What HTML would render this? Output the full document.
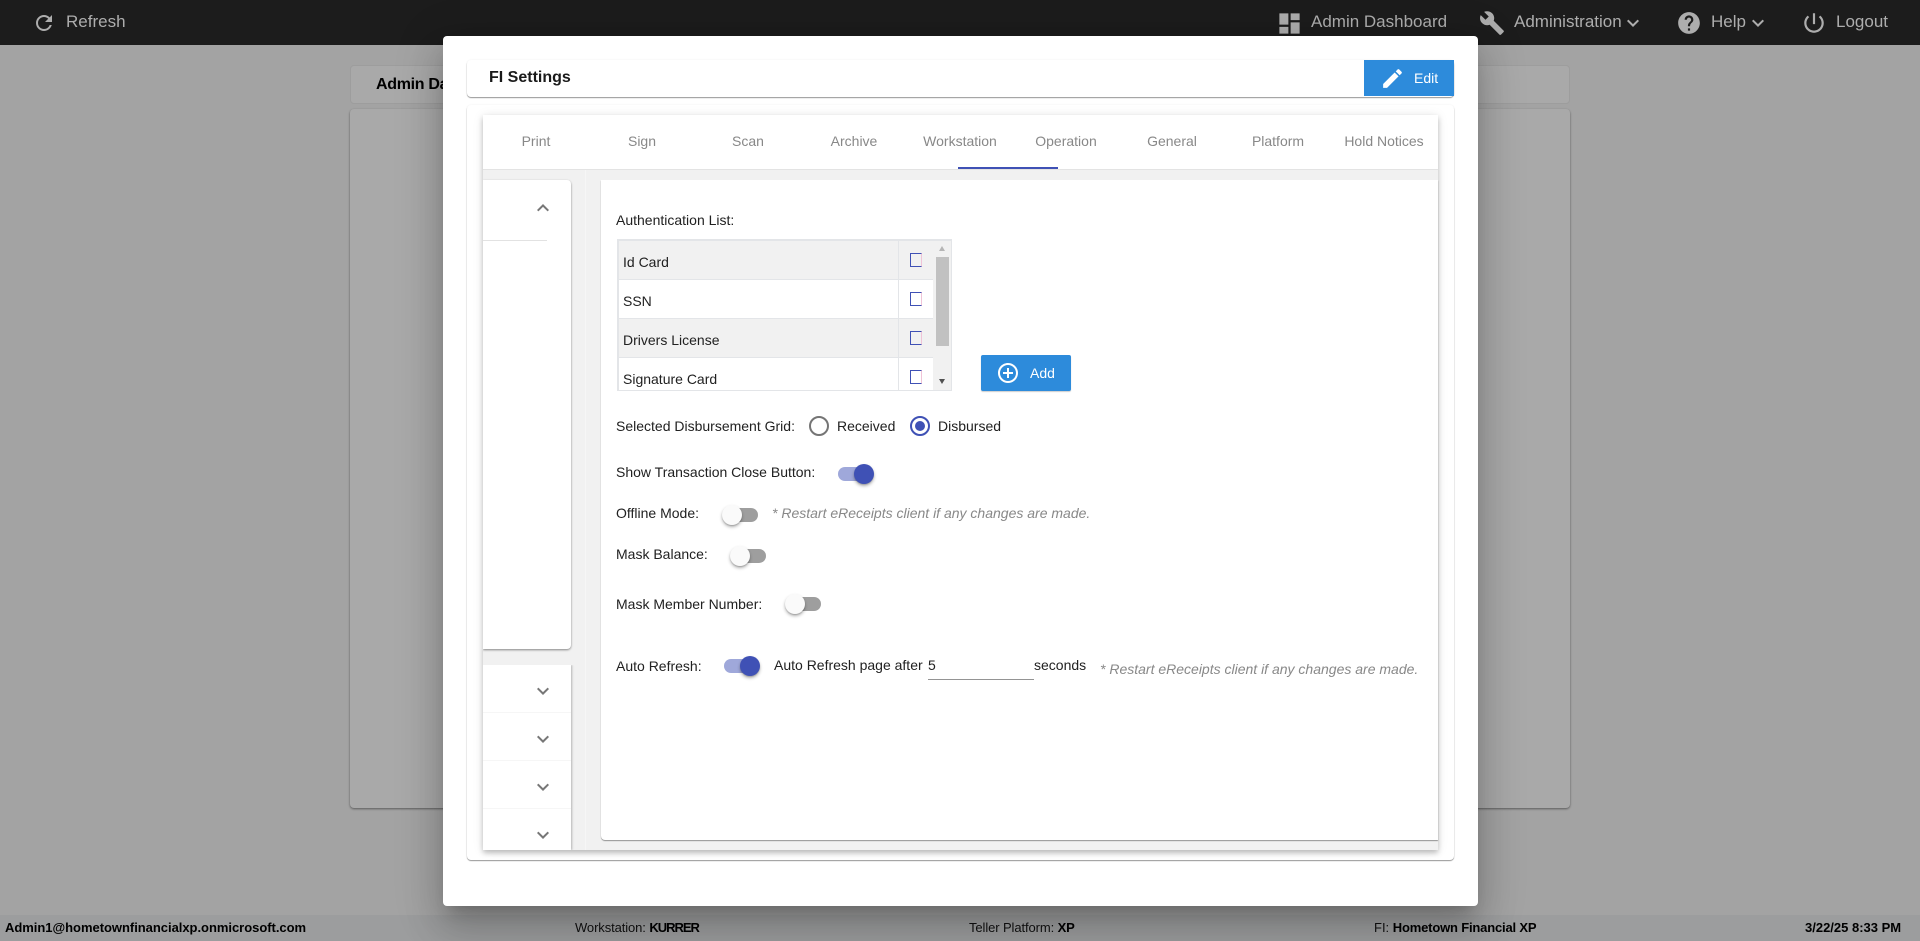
<!DOCTYPE html>
<html><head><meta charset="utf-8"><title>FI Settings</title>
<style>
*{box-sizing:border-box}
html,body{margin:0;padding:0;width:1920px;height:941px;overflow:hidden;background:#a3a3a3;font-family:"Liberation Sans",Arial,sans-serif}
.a{position:absolute}
.t{position:absolute;white-space:nowrap;height:20px;line-height:20px;font-size:14px;color:#212121}
.n{font-size:17px;color:#adadad;height:24px;line-height:24px}
.tab{position:absolute;top:131px;width:106px;text-align:center;font-size:14px;line-height:20px;color:#888}
.tr{position:absolute;height:14px;width:34px;border-radius:7px}
.th{position:absolute;width:20px;height:20px;border-radius:50%;box-shadow:0 2px 3px rgba(0,0,0,.3),0 1px 1px rgba(0,0,0,.14)}
.off{background:#9e9e9e}.on{background:#9fa8da}
.thoff{background:#fafafa}.thon{background:#3f51b5}
.rw{position:absolute;left:619px;width:314px}
.cb{position:absolute;left:910px;width:12px;height:14px;border:1px solid #3f51b5;border-right-color:#f0c4d8}
.f{font-size:13px;color:#111;height:20px;line-height:20px}
b{font-weight:bold;color:#000}
svg{position:absolute;display:block}
</style></head><body>

<div class="a" style="left:0;top:0;width:1920px;height:45px;background:#1c1c1c"></div>
<svg style="left:32px;top:11px" width="24" height="24" viewBox="0 0 24 24" fill="#adadad"><path d="M17.65 6.35C16.2 4.9 14.21 4 12 4c-4.42 0-7.99 3.58-7.99 8s3.57 8 7.99 8c3.73 0 6.84-2.55 7.73-6h-2.08c-.82 2.33-3.04 4-5.65 4-3.31 0-6-2.69-6-6s2.69-6 6-6c1.66 0 3.14.69 4.22 1.78L13 11h7V4l-2.35 2.35z"/></svg>
<div class="t n" style="left:66px;top:10px">Refresh</div>
<svg style="left:1276px;top:10px" width="27" height="27" viewBox="0 0 24 24" fill="#adadad"><path d="M3 13h8V3H3v10zm0 8h8v-6H3v6zm10 0h8V11h-8v10zm0-18v6h8V3h-8z"/></svg>
<div class="t n" style="left:1311px;top:10px">Admin Dashboard</div>
<svg style="left:1479px;top:10px" width="26" height="26" viewBox="0 0 24 24" fill="#adadad"><path d="M22.7 19l-9.1-9.1c.9-2.3.4-5-1.5-6.9-2-2-5-2.4-7.4-1.3L9 6 6 9 1.6 4.7C.4 7.1.9 10.1 2.9 12.1c1.9 1.9 4.6 2.4 6.9 1.5l9.1 9.1c.4.4 1 .4 1.4 0l2.3-2.3c.5-.4.5-1.1.1-1.4z"/></svg>
<div class="t n" style="left:1514px;top:10px">Administration</div>
<svg style="left:1621px;top:11px" width="24" height="24" viewBox="0 0 24 24" fill="#adadad"><path d="M16.59 8.59L12 13.17 7.41 8.59 6 10l6 6 6-6z"/></svg>
<svg style="left:1676px;top:10px" width="26" height="26" viewBox="0 0 24 24" fill="#adadad"><path d="M12 2C6.48 2 2 6.48 2 12s4.48 10 10 10 10-4.48 10-10S17.52 2 12 2zm1 17h-2v-2h2v2zm2.07-7.75l-.9.92C13.45 12.9 13 13.5 13 15h-2v-.5c0-1.1.45-2.1 1.17-2.83l1.24-1.26c.37-.36.59-.86.59-1.41 0-1.1-.9-2-2-2s-2 .9-2 2H8c0-2.21 1.79-4 4-4s4 1.79 4 4c0 .88-.36 1.68-.93 2.25z"/></svg>
<div class="t n" style="left:1711px;top:10px">Help</div>
<svg style="left:1746px;top:11px" width="24" height="24" viewBox="0 0 24 24" fill="#adadad"><path d="M16.59 8.59L12 13.17 7.41 8.59 6 10l6 6 6-6z"/></svg>
<svg style="left:1801px;top:10px" width="26" height="26" viewBox="0 0 24 24" fill="#adadad"><path d="M13 3h-2v10h2V3zm4.83 2.17l-1.42 1.42C17.99 7.86 19 9.81 19 12c0 3.87-3.13 7-7 7s-7-3.13-7-7c0-2.19 1.01-4.14 2.58-5.42L6.17 5.17C4.23 6.82 3 9.26 3 12c0 4.97 4.03 9 9 9s9-4.03 9-9c0-2.74-1.23-5.18-3.17-6.83z"/></svg>
<div class="t n" style="left:1836px;top:10px">Logout</div>

<div class="a" style="left:350px;top:65px;width:1220px;height:39px;background:#a9a9a9;border:1px solid #9d9d9d;border-radius:4px"></div>
<div class="t" style="left:376px;top:75px;font-size:16px;font-weight:bold;color:#000;letter-spacing:-.3px">Admin Dashboard</div>
<div class="a" style="left:350px;top:109px;width:1220px;height:699px;background:#a9a9a9;border-radius:4px;box-shadow:0 1px 2px rgba(0,0,0,.45)"></div>

<div class="a" style="left:0;top:915px;width:1920px;height:26px;background:#9c9d9e"></div>
<div class="t f" style="left:5px;top:918px;font-weight:bold;color:#000;letter-spacing:-.03px">Admin1@hometownfinancialxp.onmicrosoft.com</div>
<div class="t f" style="left:575px;top:918px;letter-spacing:-.1px">Workstation: <b style="letter-spacing:-1px">KURRER</b></div>
<div class="t f" style="left:969px;top:918px;letter-spacing:-.1px">Teller Platform: <b>XP</b></div>
<div class="t f" style="left:1374px;top:918px">FI: <b style="letter-spacing:-.18px">Hometown Financial XP</b></div>
<div class="t f" style="left:1805px;top:918px;font-weight:bold;color:#000">3/22/25 8:33 PM</div>

<div class="a" style="left:443px;top:36px;width:1035px;height:870px;background:#fff;border-radius:4px;box-shadow:0 11px 15px -7px rgba(0,0,0,.2),0 24px 38px 3px rgba(0,0,0,.14),0 9px 46px 8px rgba(0,0,0,.12)"></div>

<div class="a" style="left:467px;top:60px;width:987px;height:37px;background:#fff;border-radius:4px;box-shadow:0 1px 1px rgba(0,0,0,.4),0 0 2px rgba(0,0,0,.06)"></div>
<div class="t" style="left:489px;top:68px;font-size:16px;font-weight:bold;color:#1a1a1a">FI Settings</div>
<div class="a" style="left:1364px;top:60px;width:90px;height:36px;background:#2d8bdb"></div>
<svg style="left:1380px;top:66px" width="25" height="25" viewBox="0 0 24 24" fill="#fff"><path d="M3 17.25V21h3.75L17.81 9.94l-3.75-3.75L3 17.25zM20.71 7.04c.39-.39.39-1.02 0-1.41l-2.34-2.34c-.39-.39-1.02-.39-1.41 0l-1.83 1.83 3.75 3.75 1.83-1.83z"/></svg>
<div class="t" style="left:1414px;top:68px;color:#fff">Edit</div>

<div class="a" style="left:467px;top:105px;width:987px;height:755px;background:#fff;border-radius:4px;box-shadow:0 1px 1px rgba(0,0,0,.4),0 0 2px rgba(0,0,0,.06)"></div>

<div class="a" style="left:483px;top:115px;width:955px;height:735px;background:#f1f1f1;box-shadow:0 3px 5px rgba(0,0,0,.22),0 1px 10px rgba(0,0,0,.1)"></div>
<div class="a" style="left:483px;top:115px;width:955px;height:54px;background:#fff"></div>
<div class="a" style="left:483px;top:169px;width:955px;height:1px;background:#e3e3e3"></div>
<div class="tab" style="left:483px">Print</div>
<div class="tab" style="left:589px">Sign</div>
<div class="tab" style="left:695px">Scan</div>
<div class="tab" style="left:801px">Archive</div>
<div class="tab" style="left:907px">Workstation</div>
<div class="tab" style="left:1013px">Operation</div>
<div class="tab" style="left:1119px">General</div>
<div class="tab" style="left:1225px">Platform</div>
<div class="tab" style="left:1331px">Hold Notices</div>
<div class="a" style="left:958px;top:167px;width:100px;height:2px;background:#3f51b5"></div>

<div class="a" style="left:585px;top:170px;width:1px;height:680px;background:#f6f6f6"></div>
<div class="a" style="left:483px;top:180px;width:88px;height:469px;background:#fff;border-radius:0 4px 4px 0;box-shadow:0 1px 2px rgba(0,0,0,.45);clip-path:inset(-4px -4px -4px 0)"></div>
<svg style="left:531px;top:196px" width="24" height="24" viewBox="0 0 24 24" fill="#777"><path d="M12 8l-6 6 1.41 1.41L12 10.83l4.59 4.58L18 14z"/></svg>
<div class="a" style="left:483px;top:240px;width:64px;height:1px;background:#e2e2e2"></div>

<div class="a" style="left:483px;top:665px;width:88px;height:185px;background:#fff;box-shadow:1px 0 2px rgba(0,0,0,.25);clip-path:inset(0 -4px 0 0)"></div>
<div class="a" style="left:483px;top:712px;width:88px;height:1px;background:#f6f6f6"></div>
<div class="a" style="left:483px;top:760px;width:88px;height:1px;background:#f6f6f6"></div>
<div class="a" style="left:483px;top:808px;width:88px;height:1px;background:#f6f6f6"></div>
<svg style="left:531px;top:679px" width="24" height="24" viewBox="0 0 24 24" fill="#777"><path d="M16.59 8.59L12 13.17 7.41 8.59 6 10l6 6 6-6z"/></svg>
<svg style="left:531px;top:727px" width="24" height="24" viewBox="0 0 24 24" fill="#777"><path d="M16.59 8.59L12 13.17 7.41 8.59 6 10l6 6 6-6z"/></svg>
<svg style="left:531px;top:775px" width="24" height="24" viewBox="0 0 24 24" fill="#777"><path d="M16.59 8.59L12 13.17 7.41 8.59 6 10l6 6 6-6z"/></svg>
<svg style="left:531px;top:823px" width="24" height="24" viewBox="0 0 24 24" fill="#777"><path d="M16.59 8.59L12 13.17 7.41 8.59 6 10l6 6 6-6z"/></svg>

<div class="a" style="left:601px;top:180px;width:837px;height:660px;background:#fff;border-radius:0 0 0 4px;box-shadow:0 1px 1px rgba(0,0,0,.4)"></div>

<div class="t" style="left:616px;top:210px">Authentication List:</div>
<div class="a" style="left:617px;top:239px;width:335px;height:152px;background:#fff;border:1px solid #e3e5e8;border-top-width:2px;border-left-width:2px"></div>
<div class="rw" style="top:241px;height:38px;background:#f1f1f1"></div>
<div class="rw" style="top:279px;height:1px;background:#e3e5e8"></div>
<div class="rw" style="top:318px;height:1px;background:#e3e5e8"></div>
<div class="rw" style="top:319px;height:38px;background:#f1f1f1"></div>
<div class="rw" style="top:357px;height:1px;background:#e3e5e8"></div>
<div class="a" style="left:898px;top:241px;width:1px;height:149px;background:#e3e5e8"></div>
<div class="a" style="left:933px;top:241px;width:18px;height:149px;background:#f1f1f1"></div>
<div class="a" style="left:936px;top:257px;width:13px;height:89px;background:#c1c1c1"></div>
<div class="a" style="left:939px;top:246px;width:0;height:0;border:3.5px solid transparent;border-top:0;border-bottom:5px solid #b5b5b5"></div>
<div class="a" style="left:939px;top:379px;width:0;height:0;border:3.5px solid transparent;border-bottom:0;border-top:5px solid #505050"></div>
<div class="t" style="left:623px;top:252px">Id Card</div>
<div class="t" style="left:623px;top:291px">SSN</div>
<div class="t" style="left:623px;top:330px">Drivers License</div>
<div class="t" style="left:623px;top:369px">Signature Card</div>
<div class="cb" style="top:253px"></div>
<div class="cb" style="top:292px"></div>
<div class="cb" style="top:331px"></div>
<div class="cb" style="top:370px"></div>

<div class="a" style="left:981px;top:355px;width:90px;height:36px;background:#2d8bdb;border-radius:2px;box-shadow:0 1px 1px rgba(0,0,0,.2)"></div>
<svg style="left:996px;top:361px" width="24" height="24" viewBox="0 0 24 24" fill="#fff"><path d="M13 7h-2v4H7v2h4v4h2v-4h4v-2h-4V7zm-1-5C6.48 2 2 6.48 2 12s4.48 10 10 10 10-4.48 10-10S17.52 2 12 2zm0 18c-4.41 0-8-3.59-8-8s3.59-8 8-8 8 3.59 8 8-3.59 8-8 8z"/></svg>
<div class="t" style="left:1030px;top:363px;color:#fff">Add</div>

<div class="t" style="left:616px;top:416px">Selected Disbursement Grid:</div>
<div class="a" style="left:809px;top:416px;width:20px;height:20px;border:2px solid #757575;border-radius:50%"></div>
<div class="t" style="left:837px;top:416px">Received</div>
<div class="a" style="left:910px;top:416px;width:20px;height:20px;border:2px solid #3f51b5;border-radius:50%"></div>
<div class="a" style="left:915px;top:421px;width:10px;height:10px;background:#3f51b5;border-radius:50%"></div>
<div class="t" style="left:938px;top:416px">Disbursed</div>

<div class="t" style="left:616px;top:462px">Show Transaction Close Button:</div>
<div class="tr on" style="left:838px;top:467px"></div><div class="th thon" style="left:854px;top:464px"></div>

<div class="t" style="left:616px;top:503px">Offline Mode:</div>
<div class="tr off" style="left:724px;top:508px"></div><div class="th thoff" style="left:722px;top:505px"></div>
<div class="t" style="left:772px;top:503px;font-style:italic;color:#888">* Restart eReceipts client if any changes are made.</div>

<div class="t" style="left:616px;top:544px">Mask Balance:</div>
<div class="tr off" style="left:732px;top:549px"></div><div class="th thoff" style="left:730px;top:546px"></div>

<div class="t" style="left:616px;top:594px">Mask Member Number:</div>
<div class="tr off" style="left:787px;top:597px"></div><div class="th thoff" style="left:785px;top:594px"></div>

<div class="t" style="left:616px;top:656px">Auto Refresh:</div>
<div class="tr on" style="left:724px;top:659px"></div><div class="th thon" style="left:740px;top:656px"></div>
<div class="t" style="left:774px;top:655px">Auto Refresh page after</div>
<div class="t" style="left:928px;top:655px">5</div>
<div class="a" style="left:928px;top:679px;width:106px;height:1px;background:#949494"></div>
<div class="t" style="left:1034px;top:655px">seconds</div>
<div class="t" style="left:1100px;top:659px;font-style:italic;color:#888">* Restart eReceipts client if any changes are made.</div>

</body></html>
